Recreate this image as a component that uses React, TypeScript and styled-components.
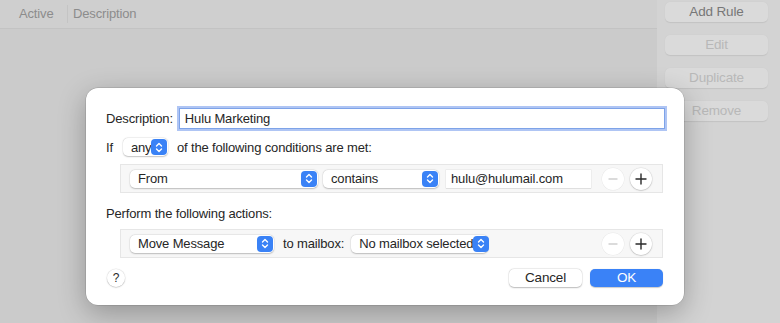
import React from 'react';
import styled, { createGlobalStyle } from 'styled-components';

const GlobalStyle = createGlobalStyle`
  html, body {
    margin: 0;
    padding: 0;
    width: 780px;
    height: 323px;
    overflow: hidden;
    background: #cbcbcb;
    font-family: "Liberation Sans", Arial, sans-serif;
    font-size: 13px;
    letter-spacing: -0.15px;
    color: #262626;
  }
`;

const Screen = styled.div`
  position: relative;
  display: flex;
  width: 780px;
  height: 323px;
`;

const ListArea = styled.div`
  flex: 1;
  display: flex;
  flex-direction: column;
`;

const ListHeader = styled.div`
  display: flex;
  align-items: center;
  height: 28px;
  background: #cfcfcf;
  border-bottom: 1px solid #c3c3c3;
  color: #8c8c8c;
`;

const HeaderCell = styled.div<{ width?: number; divider?: boolean }>`
  width: ${p => (p.width ? `${p.width}px` : 'auto')};
  padding-left: ${p => (p.divider ? 5 : 19)}px;
  box-sizing: border-box;
  height: 18px;
  line-height: 18px;
  border-left: ${p => (p.divider ? '1px solid #c4c4c4' : 'none')};
`;

const SidePanel = styled.div`
  width: 123px;
  background: #d3d3d3;
  display: flex;
  flex-direction: column;
  align-items: flex-start;
  padding: 2px 0 0 8px;
  box-sizing: border-box;
  gap: 13px;
`;

const SideButton = styled.div<{ enabled?: boolean }>`
  width: 103px;
  height: 20px;
  line-height: 20px;
  text-align: center;
  border-radius: 5px;
  background: #dadada;
  box-shadow: 0 0.5px 1px rgba(0, 0, 0, 0.08);
  color: ${p => (p.enabled ? '#777777' : '#b8b8b8')};
  font-size: 13.5px;
`;

const Sheet = styled.div`
  position: absolute;
  left: 86px;
  top: 88px;
  width: 598px;
  height: 217px;
  box-sizing: border-box;
  padding: 21px 21px 0 20px;
  background: #ffffff;
  border-radius: 12px;
  box-shadow: 0 0 0 0.5px rgba(0, 0, 0, 0.18), 0 8px 28px rgba(0, 0, 0, 0.28);
  display: flex;
  flex-direction: column;
`;

const Row = styled.div<{ top?: number }>`
  display: flex;
  align-items: center;
  margin-top: ${p => p.top || 0}px;
`;

const Label = styled.span<{ gap?: number }>`
  margin-right: ${p => p.gap ?? 0}px;
  white-space: nowrap;
  flex-shrink: 0;
  color: #262626;
`;

const TextInput = styled.div<{ focused?: boolean; width: number }>`
  width: ${p => p.width}px;
  height: ${p => (p.focused ? 19 : 18)}px;
  line-height: ${p => (p.focused ? 19 : 18)}px;
  flex-shrink: 0;
  box-sizing: border-box;
  padding-left: 5px;
  background: #ffffff;
  ${p =>
    p.focused
      ? 'box-shadow: 0 0 0 1px #7ea3e8, 0 0 0 3px rgba(110,150,235,0.55);'
      : 'box-shadow: 0 0.5px 0 rgba(0,0,0,0.12), 0 0 0 0.5px rgba(0,0,0,0.08);'}
`;

const Popup = styled.div<{ width: number }>`
  width: ${p => p.width}px;
  height: 18px;
  flex-shrink: 0;
  box-sizing: border-box;
  padding: 0 1px 0 8px;
  display: flex;
  align-items: center;
  justify-content: space-between;
  background: #ffffff;
  border-radius: 5px;
  box-shadow: 0 0.5px 1.5px rgba(0, 0, 0, 0.22), 0 0 0 0.5px rgba(0, 0, 0, 0.05);
  white-space: nowrap;
`;

const Stepper = styled.span`
  width: 16px;
  height: 16px;
  border-radius: 4px;
  background: #3a82f6;
  display: flex;
  align-items: center;
  justify-content: center;
  flex-shrink: 0;
`;

const RuleBox = styled.div`
  margin: 8px 0 0 14px;
  width: 543px;
  height: 29px;
  box-sizing: border-box;
  padding: 0 10px 0 9px;
  display: flex;
  align-items: center;
  gap: 5px;
  background: #f7f7f7;
  border: 1px solid #e6e6e6;
`;

const Spacer = styled.div`
  flex: 1;
`;

const RoundButton = styled.div<{ disabled?: boolean; size?: number }>`
  width: ${p => p.size || 22}px;
  height: ${p => p.size || 22}px;
  border-radius: 50%;
  background: #ffffff;
  display: flex;
  align-items: center;
  justify-content: center;
  flex-shrink: 0;
  color: ${p => (p.disabled ? '#cfcfcf' : '#2a2a2a')};
  box-shadow: ${p =>
    p.disabled
      ? '0 0 0 0.5px rgba(0,0,0,0.06)'
      : '0 0.5px 1.5px rgba(0,0,0,0.25), 0 0 0 0.5px rgba(0,0,0,0.06)'};
`;

const Footer = styled.div`
  display: flex;
  align-items: center;
  margin-top: 11px;
  gap: 8px;
`;

const PushButton = styled.div<{ primary?: boolean }>`
  width: 73px;
  height: 18px;
  line-height: 18px;
  text-align: center;
  border-radius: 5px;
  font-size: 13.5px;
  background: ${p => (p.primary ? '#3a82f7' : '#ffffff')};
  color: ${p => (p.primary ? '#ffffff' : '#262626')};
  box-shadow: ${p =>
    p.primary
      ? '0 0.5px 1px rgba(0,0,0,0.2)'
      : '0 0.5px 1.5px rgba(0,0,0,0.25), 0 0 0 0.5px rgba(0,0,0,0.06)'};
`;

const StepperIcon = () => (
  <Stepper>
    <svg width="8" height="11" viewBox="0 0 8 11" fill="none" stroke="#fff" strokeWidth="1.4" strokeLinecap="round" strokeLinejoin="round">
      <path d="M1.5 4 L4 1.5 L6.5 4" />
      <path d="M1.5 7 L4 9.5 L6.5 7" />
    </svg>
  </Stepper>
);

const Select = ({ label, width }: { label: string; width: number }) => (
  <Popup width={width}>
    <span>{label}</span>
    <StepperIcon />
  </Popup>
);

const MinusIcon = () => (
  <svg width="10" height="10" viewBox="0 0 10 10" stroke="currentColor" strokeWidth="1.3" strokeLinecap="round">
    <path d="M1 5 H9" />
  </svg>
);

const PlusIcon = () => (
  <svg width="12" height="12" viewBox="0 0 12 12" stroke="currentColor" strokeWidth="1.4" strokeLinecap="round">
    <path d="M1 6 H11 M6 1 V11" />
  </svg>
);

const AddRemove = () => (
  <>
    <RoundButton disabled>
      <MinusIcon />
    </RoundButton>
    <RoundButton style={{ marginLeft: 1 }}>
      <PlusIcon />
    </RoundButton>
  </>
);

export default function App() {
  return (
    <>
      <GlobalStyle />
      <Screen>
        <ListArea>
          <ListHeader>
            <HeaderCell width={67}>Active</HeaderCell>
            <HeaderCell divider>Description</HeaderCell>
          </ListHeader>
        </ListArea>
        <SidePanel>
          <SideButton enabled>Add Rule</SideButton>
          <SideButton>Edit</SideButton>
          <SideButton>Duplicate</SideButton>
          <SideButton>Remove</SideButton>
        </SidePanel>

        <Sheet>
          <Row>
            <Label gap={7}>Description:</Label>
            <TextInput focused width={484}>Hulu Marketing</TextInput>
          </Row>
          <Row top={10}>
            <Label gap={10}>If</Label>
            <Select label="any" width={45} />
            <Label style={{ marginLeft: 9 }}>of the following conditions are met:</Label>
          </Row>
          <RuleBox>
            <Select label="From" width={188} />
            <Select label="contains" width={116} />
            <TextInput width={145} style={{ marginLeft: 2 }}>hulu@hulumail.com</TextInput>
            <Spacer />
            <AddRemove />
          </RuleBox>
          <Row top={13}>
            <Label>Perform the following actions:</Label>
          </Row>
          <RuleBox>
            <Select label="Move Message" width={144} />
            <Label style={{ margin: '0 2px 0 4px' }}>to mailbox:</Label>
            <Select label="No mailbox selected" width={137} />
            <Spacer />
            <AddRemove />
          </RuleBox>
          <Footer>
            <RoundButton size={18} style={{ marginLeft: 1, fontSize: 12 }}>?</RoundButton>
            <Spacer />
            <PushButton>Cancel</PushButton>
            <PushButton primary>OK</PushButton>
          </Footer>
        </Sheet>
      </Screen>
    </>
  );
}
